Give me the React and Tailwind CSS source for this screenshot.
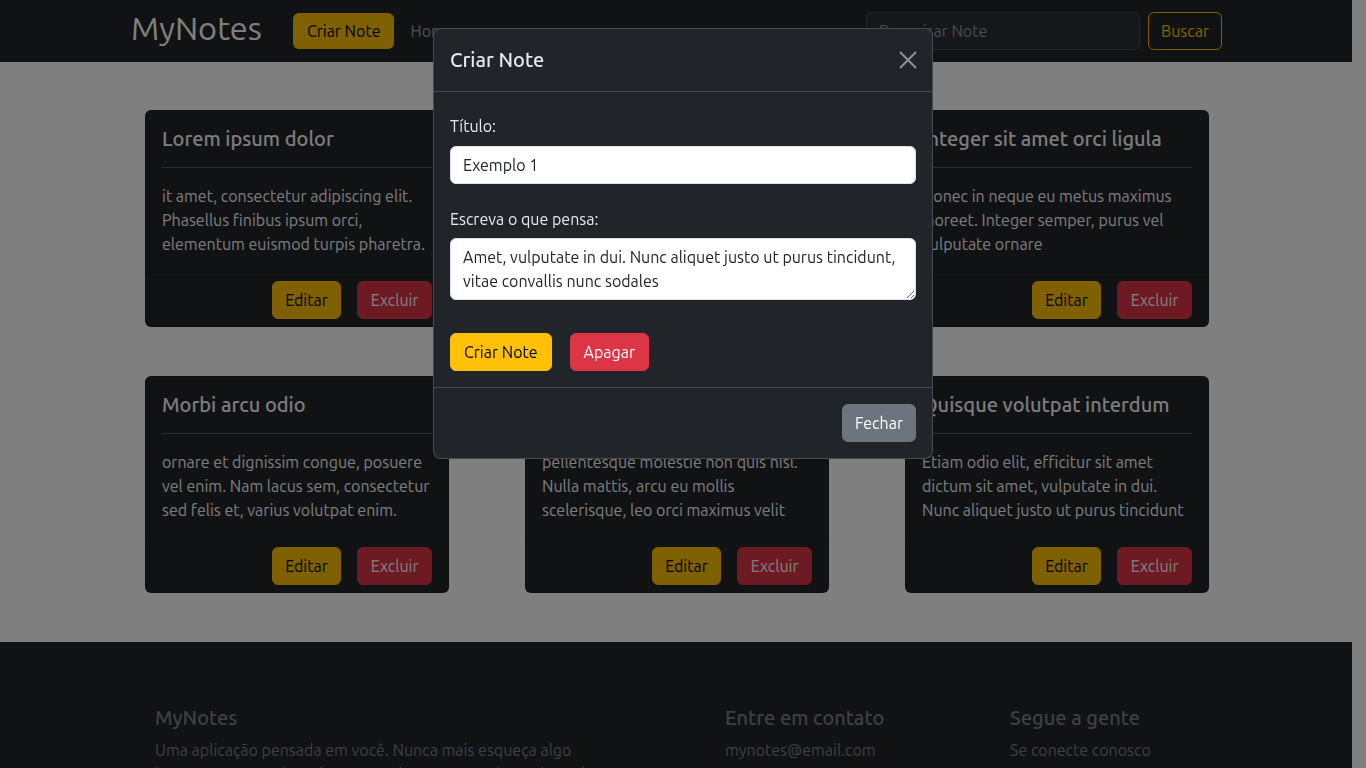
const notes = [
  {
    title: 'Lorem ipsum dolor',
    body: 'it amet, consectetur adipiscing elit. Phasellus finibus ipsum orci, elementum euismod turpis pharetra.',
  },
  {
    title: 'Vestibulum ante ipsum',
    body: 'Curabitur sed sapien nec nisi tempor faucibus. Sed ut lectus vel ligula cursus gravida.',
  },
  {
    title: 'Integer sit amet orci ligula',
    body: 'Donec in neque eu metus maximus laoreet. Integer semper, purus vel vulputate ornare',
  },
  {
    title: 'Morbi arcu odio',
    body: 'ornare et dignissim congue, posuere vel enim. Nam lacus sem, consectetur sed felis et, varius volutpat enim.',
  },
  {
    title: 'Fusce eget urna',
    body: 'pellentesque molestie non quis nisl. Nulla mattis, arcu eu mollis scelerisque, leo orci maximus velit',
  },
  {
    title: 'Quisque volutpat interdum',
    body: 'Etiam odio elit, efficitur sit amet dictum sit amet, vulputate in dui. Nunc aliquet justo ut purus tincidunt',
  },
];

function NoteCard({ note }) {
  return (
    <div className="w-[304px] rounded-md border border-black/[0.175] bg-[#212529] flex flex-col">
      <div className="p-4">
        <h5 className="text-xl font-medium leading-[1.2] text-[#f8f9fa]">{note.title}</h5>
        <div className="my-4 h-px bg-[#57595e]" />
        <p className="text-base leading-6 text-[#f8f9fa]">{note.body}</p>
      </div>
      <div className="border-t border-[#1b1e21] px-4 pt-2 pb-[7px] flex justify-end gap-4">
        <button className="rounded-md border border-[#ffc107] bg-[#ffc107] px-[12.5px] py-1.5 text-base leading-6 text-black">
          Editar
        </button>
        <button className="rounded-md border border-[#dc3545] bg-[#dc3545] px-[12.5px] py-1.5 text-base leading-6 text-white">
          Excluir
        </button>
      </div>
    </div>
  );
}

export default function App() {
  return (
    <div
      className="h-screen overflow-hidden bg-white pr-[14px]"
      style={{ fontFamily: 'Ubuntu, Roboto, "Liberation Sans", sans-serif' }}
    >
      <nav className="h-[62px] bg-[#212529] flex items-center pl-[131px] pr-[130px]">
        <span className="mb-[6px] text-[32.5px] leading-none text-white">MyNotes</span>
        <button className="ml-[31px] rounded-md bg-[#ffc107] px-[14px] py-1.5 text-base leading-6 text-black">
          Criar Note
        </button>
        <a className="ml-4 text-base text-white/55">Home</a>
        <div className="ml-auto flex items-center gap-2">
          <input
            className="w-[274px] h-[38px] rounded-md border border-[#495057] bg-[#2b3035] px-3 text-base text-[#dee2e6] placeholder:text-[#8d939a] outline-none"
            placeholder="Pesquisar Note"
          />
          <button className="h-[38px] rounded-md border border-[#ffc107] px-3 text-base text-[#ffc107]">
            Buscar
          </button>
        </div>
      </nav>

      <main className="pt-12 pb-[49px]">
        <div className="grid grid-cols-[304px_304px_304px] gap-x-[76px] gap-y-[49px] pl-[145px]">
          {notes.map((n) => (
            <NoteCard key={n.title} note={n} />
          ))}
        </div>
      </main>

      <footer className="bg-[#212529] pt-16 pb-12">
        <div className="grid grid-cols-[570px_285px_285px] pl-[155px]">
          <div>
            <h5 className="mb-2 text-xl font-medium leading-6 text-[#7a8087]">MyNotes</h5>
            <p className="text-base leading-6 text-[#7a8087]">
              Uma aplicação pensada em você. Nunca mais esqueça algo
              <br />
              importante, guarde tudo o que quiser e acesse de qualquer lugar.
            </p>
          </div>
          <div>
            <h5 className="mb-2 text-xl font-medium leading-6 text-[#7a8087]">Entre em contato</h5>
            <p className="text-base leading-6 text-[#7a8087]">mynotes@email.com</p>
          </div>
          <div>
            <h5 className="mb-2 text-xl font-medium leading-6 text-[#7a8087]">Segue a gente</h5>
            <p className="text-base leading-6 text-[#7a8087]">Se conecte conosco</p>
          </div>
        </div>
      </footer>

      <div className="fixed inset-0 z-40 bg-black/50" />

      <div className="fixed top-[28px] left-[433px] z-50 w-[500px] rounded-lg border border-white/[0.175] bg-[#212529] text-[#e6e8ea]">
        <div className="flex items-center justify-between border-b border-white/[0.175] pl-4 pr-[15px] py-4">
          <h1 className="text-xl font-medium leading-[30px]">Criar Note</h1>
          <svg width="18" height="18" viewBox="0 0 18 18" className="text-[#8e9093]">
            <path d="M1 1L17 17M17 1L1 17" stroke="currentColor" strokeWidth="2" />
          </svg>
        </div>
        <div className="px-4 pt-[22px] pb-4">
          <label className="block text-base leading-6 mb-2">Título:</label>
          <input
            className="block w-full h-[38px] rounded-md border border-[#dee2e6] bg-white px-3 text-base text-[#212529] outline-none"
            defaultValue="Exemplo 1"
          />
          <label className="block mt-[23px] mb-[7px] text-base leading-6">Escreva o que pensa:</label>
          <textarea
            rows={2}
            className="block w-full rounded-md border border-[#dee2e6] bg-white px-3 py-1.5 text-base leading-6 text-[#212529] outline-none"
            defaultValue="Amet, vulputate in dui. Nunc aliquet justo ut purus tincidunt, vitae convallis nunc sodales"
          />
          <div className="mt-[33px] flex gap-[18px]">
            <button className="rounded-md border border-[#ffc107] bg-[#ffc107] px-[13px] py-1.5 text-base leading-6 text-black">
              Criar Note
            </button>
            <button className="rounded-md border border-[#dc3545] bg-[#dc3545] px-[13px] py-1.5 text-base leading-6 text-white">
              Apagar
            </button>
          </div>
        </div>
        <div className="flex justify-end border-t border-white/[0.175] p-3">
          <button className="m-1 rounded-md border border-[#6c757d] bg-[#6c757d] px-3 py-1.5 text-base leading-6 text-white">
            Fechar
          </button>
        </div>
      </div>
    </div>
  );
}
